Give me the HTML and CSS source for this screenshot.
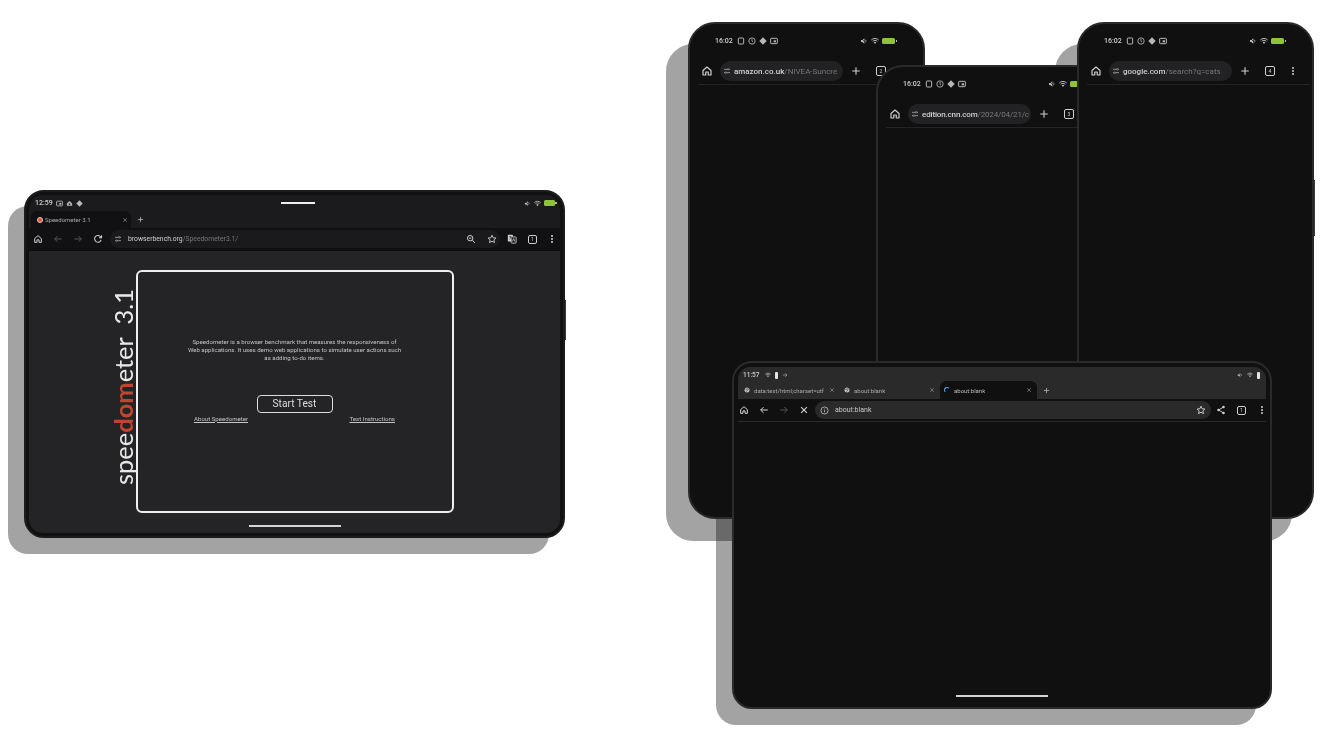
FILE: index.html
```html
<!DOCTYPE html>
<html lang="en">
<head>
    <meta charset="utf-8">
    <title>Chrome on tablets and phones</title>
    <link rel="stylesheet" href="styles.css">
</head>
<body>
    <svg class="defs" width="0" height="0">
        <symbol id="i-home" viewBox="0 0 24 24"><path d="M4 11 12 4l8 7v9h-5.500v-6h-5v6H4z" fill="none" stroke="currentColor" stroke-width="2.400" stroke-linejoin="round"/></symbol>
        <symbol id="i-tune" viewBox="0 0 24 24"><path d="M3 7h10M18 7h3M3 17h3M11 17h10" fill="none" stroke="currentColor" stroke-width="2.600"/><circle cx="15.500" cy="7" r="2.400" fill="none" stroke="currentColor" stroke-width="2.200"/><circle cx="8.500" cy="17" r="2.400" fill="none" stroke="currentColor" stroke-width="2.200"/></symbol>
        <symbol id="i-plus" viewBox="0 0 24 24"><path d="M12 3v18M3 12h18" fill="none" stroke="currentColor" stroke-width="2.600"/></symbol>
        <symbol id="i-close" viewBox="0 0 24 24"><path d="m5 5 14 14M19 5 5 19" fill="none" stroke="currentColor" stroke-width="2.600"/></symbol>
        <symbol id="i-back" viewBox="0 0 24 24"><path d="M21 12H4M11 5l-7 7 7 7" fill="none" stroke="currentColor" stroke-width="2.400"/></symbol>
        <symbol id="i-forward" viewBox="0 0 24 24"><path d="M3 12h17M13 5l7 7-7 7" fill="none" stroke="currentColor" stroke-width="2.400"/></symbol>
        <symbol id="i-reload" viewBox="0 0 24 24"><path d="M19.500 14a8 8 0 1 1-2-8L20 8.500M20.500 3v6h-6" fill="none" stroke="currentColor" stroke-width="2.500"/></symbol>
        <symbol id="i-zoom" viewBox="0 0 24 24"><circle cx="10" cy="10" r="6.500" fill="none" stroke="currentColor" stroke-width="2.400"/><path d="m15 15 6.500 6.500M7 10h6" fill="none" stroke="currentColor" stroke-width="2.400"/></symbol>
        <symbol id="i-star" viewBox="0 0 24 24"><path d="m12 3 2.800 6 6.600.7-4.900 4.400 1.400 6.500L12 17.300l-5.900 3.300 1.400-6.500-4.900-4.400L9.200 9z" fill="none" stroke="currentColor" stroke-width="2.200" stroke-linejoin="round"/></symbol>
        <symbol id="i-translate" viewBox="0 0 24 24"><rect x="2" y="2" width="12" height="16" rx="1.500" fill="currentColor"/><rect x="10" y="7" width="12" height="15" rx="1.500" fill="#1a1a1c" stroke="currentColor" stroke-width="2"/><path d="M5 7h6M8 5v2M6 13c2-1 4-3 4-6" fill="none" stroke="#1a1a1c" stroke-width="1.500"/><path d="M13 18l3-7 3 7" fill="none" stroke="currentColor" stroke-width="1.800"/></symbol>
        <symbol id="i-share" viewBox="0 0 24 24"><path d="M18 5 6 12l12 7" fill="none" stroke="currentColor" stroke-width="2.200"/><circle cx="18" cy="5" r="3" fill="currentColor"/><circle cx="6" cy="12" r="3" fill="currentColor"/><circle cx="18" cy="19" r="3" fill="currentColor"/></symbol>
        <symbol id="i-info" viewBox="0 0 24 24"><circle cx="12" cy="12" r="9.500" fill="none" stroke="currentColor" stroke-width="2.200"/><path d="M12 11v6M12 7v2" fill="none" stroke="currentColor" stroke-width="2.200"/></symbol>
        <symbol id="i-globe" viewBox="0 0 24 24"><circle cx="12" cy="12" r="10" fill="currentColor"/><path d="M3 8c5 0 6 3 9 3s2 5 0 6-3 3-3 4M15 3c-1 2-3 2-3 4s4 1 8 1" fill="none" stroke="#2b2a2a" stroke-width="2.200"/></symbol>
        <symbol id="i-screen" viewBox="0 0 24 24"><rect x="4" y="3" width="16" height="18" rx="2.500" fill="none" stroke="currentColor" stroke-width="3"/></symbol>
        <symbol id="i-alert" viewBox="0 0 24 24"><circle cx="12" cy="12" r="9.500" fill="none" stroke="currentColor" stroke-width="2.600"/><path d="M12 6v7l3 2" fill="none" stroke="currentColor" stroke-width="2.400"/></symbol>
        <symbol id="i-diamond" viewBox="0 0 24 24"><path d="m12 1 11 11-11 11L1 12z" fill="currentColor"/></symbol>
        <symbol id="i-card" viewBox="0 0 24 24"><rect x="2" y="4" width="20" height="16" rx="2" fill="none" stroke="currentColor" stroke-width="3"/><rect x="11" y="10" width="7" height="6" fill="currentColor"/></symbol>
        <symbol id="i-cloud" viewBox="0 0 24 24"><path d="M12 3 21 12v8H3v-8z" fill="currentColor"/><circle cx="12" cy="14" r="3" fill="#1a1a1c"/></symbol>
        <symbol id="i-mute" viewBox="0 0 24 24"><path d="M3 9h4l6-5v16l-6-5H3z" fill="currentColor"/><path d="m3 3 18 18" fill="none" stroke="#101010" stroke-width="2"/><path d="M16 8c2 2 2 6 0 8" fill="none" stroke="currentColor" stroke-width="2.400"/></symbol>
        <symbol id="i-wifi" viewBox="0 0 24 24"><path d="M1 9c6-6 16-6 22 0M5 13c4-4 10-4 14 0" fill="none" stroke="currentColor" stroke-width="3"/><path d="m8 16 4 5 4-5c-2-2-6-2-8 0z" fill="currentColor"/></symbol>
    </svg>

    <main class="canvas">

        <!-- speedometer tablet -->
        <section class="device tablet tablet-speedo">
            <div class="status">
                <span class="time">12:59</span>
                <svg class="ico-s"><use href="#i-card"/></svg>
                <svg class="ico-s"><use href="#i-cloud"/></svg>
                <svg class="ico-s"><use href="#i-diamond"/></svg>
                <span class="drag-handle"></span>
                <svg class="ico-s"><use href="#i-mute"/></svg>
                <svg class="ico-s"><use href="#i-wifi"/></svg>
                <span class="battery"></span>
            </div>
            <div class="tabs-row">
                <div class="tab tab-on">
                    <span class="favicon"></span>
                    <span class="tab-title">Speedometer 3.1</span>
                    <svg class="ico-x"><use href="#i-close"/></svg>
                </div>
                <svg class="ico-plus"><use href="#i-plus"/></svg>
            </div>
            <div class="toolbar toolbar-speedo">
                <svg class="ico"><use href="#i-home"/></svg>
                <svg class="ico dim"><use href="#i-back"/></svg>
                <svg class="ico dim"><use href="#i-forward"/></svg>
                <svg class="ico"><use href="#i-reload"/></svg>
                <div class="omnibox">
                    <svg class="ico-t"><use href="#i-tune"/></svg>
                    <span class="url"><b>browserbench.org</b>/Speedometer3.1/</span>
                    <svg class="ico end"><use href="#i-zoom"/></svg>
                    <svg class="ico"><use href="#i-star"/></svg>
                </div>
                <svg class="ico"><use href="#i-translate"/></svg>
                <span class="tab-count">1</span>
                <span class="menu-dots"></span>
            </div>
            <div class="page">
                <div class="speedo-box">
                    <p class="speedo-text">Speedometer is a browser benchmark that measures the responsiveness of Web applications. It uses demo web applications to simulate user actions such as adding to-do items.</p>
                    <button class="start-btn">Start Test</button>
                    <div class="speedo-links">
                        <a href="#">About Speedometer</a>
                        <a href="#">Test Instructions</a>
                    </div>
                    <div class="speedo-logo">spee<b>dom</b>eter&nbsp; 3.1</div>
                </div>
                <span class="home-bar"></span>
            </div>
        </section>

        <!-- phones -->
        <section class="device phone phone-a">
            <div class="status">
                <span class="time">16:02</span>
                <svg class="ico-s"><use href="#i-screen"/></svg>
                <svg class="ico-s"><use href="#i-alert"/></svg>
                <svg class="ico-s"><use href="#i-diamond"/></svg>
                <svg class="ico-s"><use href="#i-card"/></svg>
                <span class="spacer"></span>
                <svg class="ico-s"><use href="#i-mute"/></svg>
                <svg class="ico-s"><use href="#i-wifi"/></svg>
                <span class="battery"></span>
            </div>
            <div class="toolbar toolbar-phone">
                <svg class="ico ico-home"><use href="#i-home"/></svg>
                <div class="omnibox">
                    <svg class="ico-t"><use href="#i-tune"/></svg>
                    <span class="url"><b>amazon.co.uk</b>/NIVEA-Suncre</span>
                </div>
                <svg class="ico"><use href="#i-plus"/></svg>
                <span class="tab-count">2</span>
                <span class="menu-dots"></span>
            </div>
        </section>

        <section class="device phone phone-b">
            <div class="status">
                <span class="time">16:02</span>
                <svg class="ico-s"><use href="#i-screen"/></svg>
                <svg class="ico-s"><use href="#i-alert"/></svg>
                <svg class="ico-s"><use href="#i-diamond"/></svg>
                <svg class="ico-s"><use href="#i-card"/></svg>
                <span class="spacer"></span>
                <svg class="ico-s"><use href="#i-mute"/></svg>
                <svg class="ico-s"><use href="#i-wifi"/></svg>
                <span class="battery"></span>
            </div>
            <div class="toolbar toolbar-phone">
                <svg class="ico ico-home"><use href="#i-home"/></svg>
                <div class="omnibox">
                    <svg class="ico-t"><use href="#i-tune"/></svg>
                    <span class="url"><b>edition.cnn.com</b>/2024/04/21/c</span>
                </div>
                <svg class="ico"><use href="#i-plus"/></svg>
                <span class="tab-count">3</span>
                <span class="menu-dots"></span>
            </div>
        </section>

        <section class="device phone phone-c">
            <div class="status">
                <span class="time">16:02</span>
                <svg class="ico-s"><use href="#i-screen"/></svg>
                <svg class="ico-s"><use href="#i-alert"/></svg>
                <svg class="ico-s"><use href="#i-diamond"/></svg>
                <svg class="ico-s"><use href="#i-card"/></svg>
                <span class="spacer"></span>
                <svg class="ico-s"><use href="#i-mute"/></svg>
                <svg class="ico-s"><use href="#i-wifi"/></svg>
                <span class="battery"></span>
            </div>
            <div class="toolbar toolbar-phone">
                <svg class="ico ico-home"><use href="#i-home"/></svg>
                <div class="omnibox">
                    <svg class="ico-t"><use href="#i-tune"/></svg>
                    <span class="url"><b>google.com</b>/search?q=cats</span>
                </div>
                <svg class="ico"><use href="#i-plus"/></svg>
                <span class="tab-count">4</span>
                <span class="menu-dots"></span>
            </div>
        </section>

        <!-- about:blank tablet -->
        <section class="device tablet tablet-blank">
            <div class="strip">
                <div class="status">
                    <span class="time">11:57</span>
                    <svg class="ico-s"><use href="#i-wifi"/></svg>
                    <span class="status-bar-mark"></span>
                    <svg class="ico-s"><use href="#i-forward"/></svg>
                    <span class="spacer"></span>
                    <svg class="ico-s"><use href="#i-mute"/></svg>
                    <svg class="ico-s"><use href="#i-wifi"/></svg>
                    <span class="status-bar-mark"></span>
                </div>
                <div class="tabs-row">
                    <div class="tab">
                        <svg class="ico-fav"><use href="#i-globe"/></svg>
                        <span class="tab-title">data:text/html;charset=utf</span>
                        <svg class="ico-x"><use href="#i-close"/></svg>
                    </div>
                    <div class="tab">
                        <svg class="ico-fav"><use href="#i-globe"/></svg>
                        <span class="tab-title">about:blank</span>
                        <svg class="ico-x"><use href="#i-close"/></svg>
                    </div>
                    <div class="tab tab-on">
                        <span class="spinner"></span>
                        <span class="tab-title">about:blank</span>
                        <svg class="ico-x"><use href="#i-close"/></svg>
                    </div>
                    <svg class="ico-plus"><use href="#i-plus"/></svg>
                </div>
            </div>
            <div class="toolbar toolbar-blank">
                <svg class="ico"><use href="#i-home"/></svg>
                <svg class="ico"><use href="#i-back"/></svg>
                <svg class="ico dim"><use href="#i-forward"/></svg>
                <svg class="ico"><use href="#i-close"/></svg>
                <div class="omnibox">
                    <svg class="ico-i"><use href="#i-info"/></svg>
                    <span class="url">about:blank</span>
                    <svg class="ico end"><use href="#i-star"/></svg>
                </div>
                <svg class="ico"><use href="#i-share"/></svg>
                <span class="tab-count">1</span>
                <span class="menu-dots"></span>
            </div>
            <span class="home-bar"></span>
        </section>

    </main>
</body>
</html>
```

FILE: styles.css
```css
html, body {
    margin: 0;
    padding: 0;
    background-color: #fff;
}

body {
    font-family: Roboto, "Noto Sans", sans-serif;
    color: #d8d8d8;
    overflow: hidden;
}

.defs {
    position: absolute;
}

/* the source is a soft gif, so everything is a bit blurred */
.canvas {
    position: relative;
    width: 1333px;
    height: 735px;
    overflow: hidden;
    filter: blur(0.4px);
    will-change: transform;
}

svg {
    flex: none;
}

/* devices sit on a free canvas */
.device {
    position: absolute;
    box-sizing: border-box;
    display: flex;
    flex-direction: column;
    background-color: #101010;
}

/* flat shadow, always behind every device */
.device::before {
    content: "";
    position: absolute;
    z-index: -1;
    border-radius: inherit;
    background-color: rgba(0, 0, 0, 0.36);
}

.tablet {
    width: 540px;
    height: 348px;
    border-radius: 20px;
    border: 2px solid #2a2a2a;
}

.tablet::before {
    top: 14px;
    left: -18px;
    right: 14px;
    bottom: -18px;
}

.phone {
    width: 237px;
    height: 497px;
    border-radius: 27px;
    border: 2px solid #2a2a2a;
}

.phone::before {
    top: 20px;
    left: -24px;
    right: 20px;
    bottom: -24px;
}

.phone-a { left: 688px; top: 22px; }
.phone-b { left: 876px; top: 65px; }
.phone-c { left: 1077px; top: 22px; }

.phone-b .url {
    letter-spacing: -0.150px;
}

/* side buttons */
.phone-c::after,
.tablet-speedo::after {
    content: "";
    position: absolute;
    right: -3px;
    width: 1.500px;
    background-color: #3a3a3a;
}

.phone-c::after {
    top: 156px;
    height: 56px;
}

.tablet-speedo::after {
    top: 108px;
    height: 40px;
}

.tablet-speedo {
    left: 24px;
    top: 190px;
    width: 541px;
    background-color: #111;
    padding: 3px;
    border-color: #1c1c1c;
}

.tablet-blank {
    left: 732px;
    top: 361px;
    padding: 4px;
}

/* status bar */
.status {
    display: flex;
    align-items: center;
    height: 14px;
    gap: 3px;
    font-size: 7px;
    color: #d0d0d0;
}

.time {
    font-weight: 500;
    margin-right: 1px;
}

.spacer {
    flex: 1;
}

.ico-s {
    width: 8px;
    height: 8px;
    color: #b8b8b8;
}

.battery {
    position: relative;
    flex: none;
    width: 13px;
    height: 6px;
    border-radius: 1.500px;
    background-color: #8fc33a;
    margin-right: 2px;
}

.battery::after {
    content: "";
    position: absolute;
    right: -2px;
    top: 2px;
    width: 1.500px;
    height: 2px;
    background-color: #b8b8b8;
}

.status-bar-mark {
    flex: none;
    width: 3px;
    height: 7px;
    border-radius: 1px;
    background-color: #e4e4e4;
}

.drag-handle {
    flex: none;
    width: 34px;
    height: 2px;
    background-color: #eee;
    margin-left: 195px;
    margin-right: 206px;
}

/* tabs */
.tabs-row {
    display: flex;
    align-items: center;
    height: 17px;
}

.tab {
    display: flex;
    align-items: center;
    box-sizing: border-box;
    height: 17px;
    gap: 4px;
    font-size: 6px;
    color: #aaa;
}

.tab-title {
    flex: 1;
    white-space: nowrap;
    overflow: hidden;
}

.ico-x {
    width: 6px;
    height: 6px;
    color: #999;
}

.ico-plus {
    width: 7px;
    height: 7px;
    color: #bbb;
}

.ico-fav {
    width: 6px;
    height: 6px;
    color: #c4c4c4;
}

.favicon {
    flex: none;
    width: 6px;
    height: 6px;
    border-radius: 50%;
    background-color: #d8553f;
    border: 0.500px solid #e8c8c0;
    box-sizing: border-box;
}

.spinner {
    flex: none;
    width: 6px;
    height: 6px;
    box-sizing: border-box;
    border-radius: 50%;
    border: 1px solid transparent;
    border-top-color: #5d9be8;
    border-left-color: #5d9be8;
}

/* toolbars */
.toolbar {
    display: flex;
    align-items: center;
    color: #cfcfcf;
}

.omnibox {
    display: flex;
    flex: none;
    align-items: center;
    box-sizing: border-box;
    border-radius: 10px;
    background-color: #222225;
    overflow: hidden;
}

.ico {
    width: 10px;
    height: 10px;
}

.ico-home {
    width: 12px;
    height: 12px;
}

.dim {
    color: #555;
}

.end {
    margin-left: auto;
}

.ico-t {
    width: 8px;
    height: 8px;
    color: #a0a0a0;
}

.ico-i {
    width: 9px;
    height: 9px;
    color: #bbb;
}

.url {
    white-space: nowrap;
    color: #777;
}

.url b {
    font-weight: 500;
    color: #d0d0d0;
}

.tab-count {
    display: flex;
    flex: none;
    align-items: center;
    justify-content: center;
    box-sizing: border-box;
    width: 9px;
    height: 9px;
    border: 1px solid #cfcfcf;
    border-radius: 2px;
    font-size: 5px;
    line-height: 1;
}

.menu-dots {
    flex: none;
    width: 2px;
    height: 2px;
    border-radius: 50%;
    background-color: #cfcfcf;
    box-shadow: 0 -3px 0 #cfcfcf, 0 3px 0 #cfcfcf;
}

/* speedometer tablet */
.tablet-speedo .status {
    background-color: #1b1b1d;
    border-radius: 14px 14px 0 0;
    height: 16px;
    padding: 0 6px;
}

.tablet-speedo .ico-s {
    width: 7px;
    height: 7px;
}

.tablet-speedo .time {
    margin-right: 0;
}

.tablet-speedo .battery {
    width: 11px;
}

.tablet-speedo .tabs-row {
    background-color: #1b1b1d;
    padding-left: 2px;
    gap: 6px;
}

.tablet-speedo .tab-on {
    width: 100px;
    padding: 0 3px 0 6px;
    gap: 2px;
    background-color: #111113;
    border-radius: 6px 6px 0 0;
}

.toolbar-speedo {
    height: 23px;
    padding-left: 2px;
    background-color: #111113;
    border-bottom: 1px solid #0c0c0c;
    box-sizing: border-box;
}

.toolbar-speedo > .ico:nth-child(1) { margin-left: 2px; margin-right: 10px; }
.toolbar-speedo > .ico:nth-child(2) { margin-right: 10px; }
.toolbar-speedo > .ico:nth-child(3) { margin-right: 10px; }

.toolbar-speedo .omnibox {
    width: 390px;
    height: 18px;
    margin-left: 7px;
    margin-right: 7px;
    padding: 0 3px 0 4px;
    background-color: #1a1a1c;
    gap: 6px;
    font-size: 6.800px;
}

.toolbar-speedo .url b {
    font-weight: 400;
}

.toolbar-speedo .omnibox .ico.end {
    margin-right: 5px;
}

.toolbar-speedo .tab-count {
    margin-left: 11px;
    margin-right: 14px;
}

.page {
    flex: 1;
    display: flex;
    flex-direction: column;
    align-items: center;
    padding-top: 19px;
    background-color: #242426;
    border-radius: 0 0 14px 14px;
}

.speedo-box {
    position: relative;
    display: flex;
    flex-direction: column;
    align-items: center;
    box-sizing: border-box;
    width: 318px;
    height: 243px;
    padding-top: 66px;
    border: 2px solid #eee;
    border-radius: 6px;
}

.speedo-text {
    width: 216px;
    margin: 0;
    font-size: 6.100px;
    line-height: 8.200px;
    text-align: center;
    color: #c4c4c4;
}

.start-btn {
    width: 76px;
    height: 18px;
    margin-top: 32px;
    padding: 0;
    background: none;
    border: 1.500px solid #ddd;
    border-radius: 4px;
    font-family: Roboto, sans-serif;
    font-size: 10.200px;
    color: #ddd;
}

.speedo-links {
    display: flex;
    justify-content: space-between;
    width: 201px;
    margin-top: 2px;
    font-size: 6.100px;
}

.speedo-links a {
    color: #c4c4c4;
}

/* logo sticks out of the box */
.speedo-logo {
    position: absolute;
    left: -27px;
    bottom: 26px;
    writing-mode: vertical-rl;
    transform: rotate(180deg);
    font-family: Lato, sans-serif;
    font-weight: 400;
    font-size: 25.500px;
    line-height: 25px;
    color: #e8e8e8;
    white-space: nowrap;
}

.speedo-logo b {
    font-weight: 700;
    color: #c0452f;
}

.home-bar {
    flex: none;
    width: 92px;
    height: 2px;
    margin-top: 12px;
    background-color: #d4d4d4;
}

/* phones */
.phone .status {
    margin-top: 10px;
    padding: 0 26px 0 25px;
}

.toolbar-phone {
    width: 220px;
    height: 26px;
    margin-top: 10px;
    margin-left: 8px;
    padding-left: 3px;
    box-sizing: content-box;
    box-shadow: 0 1px 0 #242426;
}

.toolbar-phone .omnibox {
    width: 123px;
    height: 20px;
    margin-left: 7px;
    margin-right: 8px;
    padding: 0 3px;
    gap: 3px;
    font-size: 8px;
}

.toolbar-phone .tab-count {
    width: 10px;
    height: 10px;
    margin-left: 15px;
    margin-right: 17px;
}

/* about:blank tablet */
.strip {
    height: 32px;
    padding-top: 2px;
    box-sizing: border-box;
    background-color: #2b2a2a;
    border-radius: 12px 12px 0 0;
}

.tablet-blank .status {
    height: 12px;
    padding: 0 6px 0 5px;
    gap: 4px;
    font-size: 6.500px;
}

.tablet-blank .status .ico-s {
    width: 6px;
    height: 6px;
}

.tablet-blank .tabs-row {
    height: 18px;
    padding-left: 2px;
}

.tablet-blank .tab {
    width: 100px;
    height: 18px;
    padding: 0 5px 0 4px;
    font-size: 6px;
}

.tablet-blank .tab-on {
    width: 97px;
    background-color: #101010;
    border-radius: 6px 6px 0 0;
    color: #bbb;
}

.tablet-blank .ico-plus {
    margin-left: 6px;
}

.toolbar-blank {
    height: 23px;
    padding-left: 1px;
    box-sizing: border-box;
    border-bottom: 1px solid #2a2a2c;
    color: #d4d4d4;
}

.toolbar-blank > .ico {
    margin-right: 10px;
}

.toolbar-blank > .ico:nth-child(4) {
    margin-right: 6px;
}

.toolbar-blank .omnibox {
    width: 396px;
    height: 18px;
    margin-right: 5px;
    padding: 0 5px;
    background-color: #2a2a2b;
    gap: 6px;
    font-size: 7px;
}

.toolbar-blank .url {
    color: #c8c8c8;
}

.toolbar-blank .tab-count {
    margin-right: 15px;
    margin-left: 1px;
}

.tablet-blank .home-bar {
    align-self: center;
    margin-top: auto;
    margin-bottom: 6px;
}
```
